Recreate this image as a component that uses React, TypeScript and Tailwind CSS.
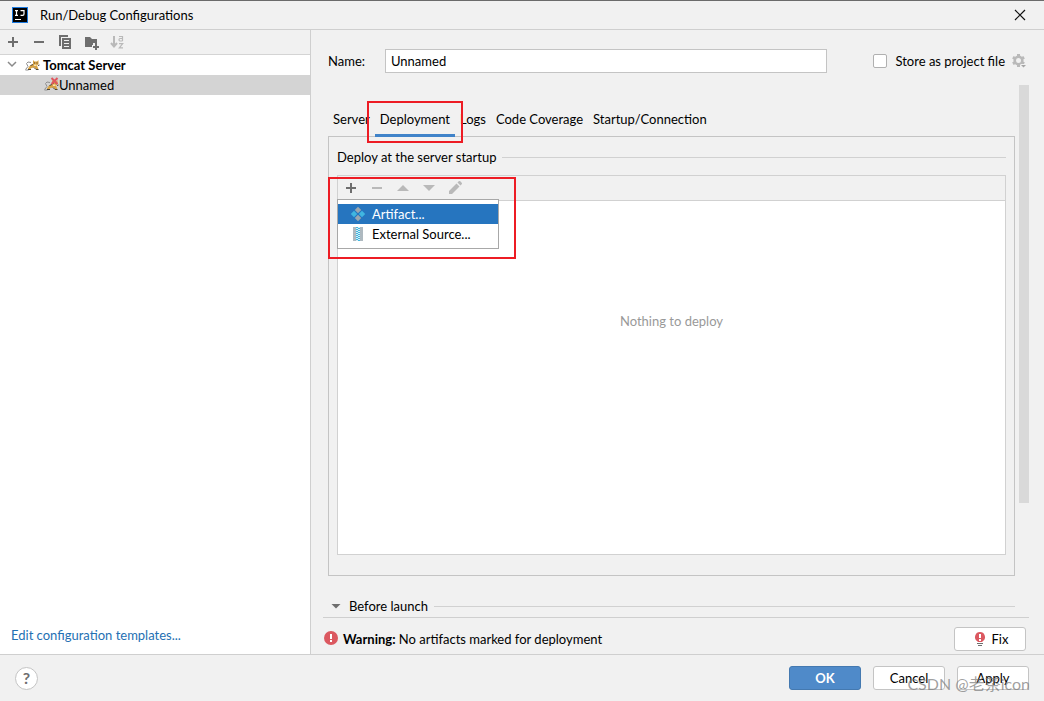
import type { ReactNode } from "react";

const tabs = ["Server", "Deployment", "Logs", "Code Coverage", "Startup/Connection"];

function IconButton({ label, disabled, children }: { label: string; disabled?: boolean; children: ReactNode }) {
  return (
    <button aria-label={label} disabled={disabled} className={`flex size-4 items-center justify-center ${disabled ? "text-[#b9b9b9]" : "text-[#6e6e6e]"}`}>
      {children}
    </button>
  );
}

function PlusIcon() {
  return (
    <svg width="16" height="16" viewBox="0 0 16 16" fill="currentColor">
      <path d="M7 3h2v4h4v2H9v4H7V9H3V7h4z" />
    </svg>
  );
}

function MinusIcon() {
  return (
    <svg width="16" height="16" viewBox="0 0 16 16" fill="currentColor">
      <path d="M3 7h10v2H3z" />
    </svg>
  );
}

function CopyIcon() {
  return (
    <svg width="16" height="16" viewBox="0 0 16 16" fill="currentColor">
      <path d="M2 1h9v2H4v9H2z" />
      <path fillRule="evenodd" d="M5 4h9v11H5zM7 6v1h5V6zM7 9v1h5V9zM7 12v1h5v-1z" />
    </svg>
  );
}

function FolderAddIcon() {
  return (
    <svg width="16" height="16" viewBox="0 0 16 16" fill="currentColor">
      <path d="M2 3h5l2 2h5v4h-4v2H9v2H2z" />
      <path d="M12 9h2v3h2v2h-2v2h-2v-2h-2v-2h2z" />
    </svg>
  );
}

function SortIcon() {
  return (
    <svg width="16" height="16" viewBox="0 0 16 16" fill="none" stroke="currentColor">
      <path strokeWidth="2" d="M5 2v10M2 9l3 3.500L8 9" />
      <path strokeWidth="1.200" d="M10 2.500h3.500v4.500M13.500 4.500H11Q10 4.500 10 5.700T11 7h2.500M10 9.600h3.700L10.300 13.900H14" />
    </svg>
  );
}

function TomcatIcon({ broken }: { broken?: boolean }) {
  return (
    <svg width="16" height="16" viewBox="0 0 16 16" className="shrink-0">
      <path fill="none" stroke="#8f8f8f" d="M1.500 12.500l2.500-3L2.500 6.500l1.500-1.500 3 .5M1.500 13h3" />
      <path fill="#d9a343" d="M4 11.500l2-3 3-1V3l1.500 1.500h2.500L14.500 3v4L13 8.500l1.500 4h-2l-2-2-3 .5L6 12.500H4z" />
      <path fill="none" stroke="#4c4435" d="M4 12.500h3M10 10.500l2 2h2.500M6.500 8.500l2.500-1M14 8.500l1.500-.5" />
      <path fill="#f6e4b3" d="M10 7.500h2.500v1.500H10z" />
      <path fill="#4c4435" d="M10 5.500h1v1h-1zM12.500 5.500h1v1h-1z" />
      {broken && <path fill="none" stroke="#e0555d" strokeWidth="2" d="M8.500 1l6 6M14.500 1l-6 6" />}
    </svg>
  );
}

function Triangle({ up }: { up?: boolean }) {
  return (
    <svg width="16" height="16" viewBox="0 0 16 16" fill="currentColor">
      <path d={up ? "M2 11l6-6 6 6z" : "M2 5h12l-6 6z"} />
    </svg>
  );
}

function PencilIcon() {
  return (
    <svg width="16" height="16" viewBox="0 0 16 16" fill="currentColor">
      <path d="M2 11l7.500-7.500 3 3L5 14H2zM10.500 2.500l1.200-1.200q.8-.8 1.600 0l1.400 1.400q.8.8 0 1.600L13.500 5.500z" />
    </svg>
  );
}

function ArtifactIcon() {
  return (
    <svg width="16" height="16" viewBox="0 0 16 16">
      <path fill="#9aa7b0" d="M8 .8l3.200 3.200L8 7.200 4.800 4zM8 8.800l3.200 3.200L8 15.200 4.800 12z" />
      <path fill="#40b6e0" d="M4 4.800L7.200 8 4 11.200.8 8zM12 4.800L15.200 8 12 11.200 8.800 8z" />
    </svg>
  );
}

function ArchiveIcon() {
  return (
    <svg width="16" height="16" viewBox="0 0 16 16">
      <path fill="#aeb9c0" d="M3 1h3v14H3zM10 1h3v14h-3z" />
      <path fill="#d4eef8" d="M6 1h4v14H6z" />
      <path fill="none" stroke="#40b6e0" strokeWidth="2" strokeDasharray="1 1" d="M7 1v14M9 2v13" />
    </svg>
  );
}

function GearIcon() {
  return (
    <svg width="16" height="16" viewBox="0 0 16 16">
      <circle cx="7.500" cy="7.500" r="3.800" fill="none" stroke="#b9b9b9" strokeWidth="2.600" />
      <path stroke="#b9b9b9" strokeWidth="3" d="M7.500 1v2M7.500 12v2M1.900 4.200l1.700 1M11.400 9.800l1.700 1M1.900 10.800l1.700-1M11.400 5.200l1.700-1" />
      <path fill="#f1f1f1" d="M9.500 11H16v5H9.500z" />
      <path fill="#a5a5a5" d="M10 12h5l-2.500 2.500z" />
    </svg>
  );
}

export default function App() {
  return (
    <div className="flex min-h-screen flex-col border-t border-[#6b6b6b] bg-[#f1f1f1] font-['Lato','Noto_Sans_CJK_SC',sans-serif] text-[13px] leading-5 text-black">
      {/* Title bar */}
      <header className="flex h-[29px] items-center border-b border-[#cfcfcf] pr-[18px] pl-3">
        <svg width="16" height="16" viewBox="0 0 16 16">
          <path fill="#1c7ae0" d="M0 0h16v16H0z" />
          <path fill="#000" d="M1 1h14v14H1z" />
          <path fill="none" stroke="#fff" strokeWidth="1.200" d="M3 3.600h3M4.500 3.600v4.800M3 8.400h3M8.500 3.600H12v3.400q0 1.400-1.400 1.400H8.500M3 12.500h6" />
        </svg>
        <h1 className="ml-3 flex-1">Run/Debug Configurations</h1>
        <button aria-label="Close" className="flex size-3 items-center justify-center">
          <svg width="12" height="12" viewBox="0 0 12 12" fill="none" stroke="#111" strokeWidth="1.200">
            <path d="M1 1l10 10M11 1L1 11" />
          </svg>
        </button>
      </header>

      <div className="flex flex-1">
        {/* Configuration tree */}
        <aside className="flex w-[311px] shrink-0 flex-col border-r border-[#cfcfcf] bg-white">
          <div className="flex h-[25px] items-center gap-[10px] border-b border-[#d4d4d4] bg-[#f1f1f1] px-[5px]">
            <IconButton label="Add"><PlusIcon /></IconButton>
            <IconButton label="Remove"><MinusIcon /></IconButton>
            <IconButton label="Copy"><CopyIcon /></IconButton>
            <IconButton label="New folder"><FolderAddIcon /></IconButton>
            <IconButton label="Sort" disabled><SortIcon /></IconButton>
          </div>
          <ul className="flex-1">
            <li className="flex h-5 items-center pl-1 font-bold">
              <svg width="16" height="16" viewBox="0 0 16 16" fill="none" stroke="#8a8a8a" strokeWidth="1.500">
                <path d="M4 5l4 4 4-4" />
              </svg>
              <span className="ml-1 flex items-center gap-[3px]"><TomcatIcon />Tomcat Server</span>
            </li>
            <li className="flex h-5 items-center bg-[#d4d4d4] pl-[43px]">
              <TomcatIcon broken />
              Unnamed
            </li>
          </ul>
          <a href="#templates" className="mb-[9px] ml-[11px] self-start text-[#2470b3]">Edit configuration templates...</a>
        </aside>

        <main className="flex min-w-0 flex-1 flex-col pr-[15px] pl-3">
          <div className="flex h-[55px] items-center pt-[6px] pl-[5px]">
            <label htmlFor="name" className="w-[57px]">Name:</label>
            <input id="name" defaultValue="Unnamed" className="h-6 min-w-0 flex-1 border border-[#c4c4c4] bg-white px-[5px] outline-none" />
            <label className="ml-[46px] flex items-center gap-2">
              <input type="checkbox" className="size-[14px] appearance-none rounded-xs border border-[#b0b0b0] bg-white" />
              Store as project file
            </label>
            <button aria-label="Storage options" className="mr-[2px] ml-[6px] size-4"><GearIcon /></button>
          </div>

          {/* Scrolled editor with its scrollbar */}
          <div className="flex flex-1">
            <div className="min-w-0 flex-1 pr-1 pl-[5px]">
              <div role="tablist" className="mt-4 -mb-px flex h-9 items-stretch">
                {tabs.map((tab) =>
                  tab === "Deployment" ? (
                    <button key={tab} role="tab" aria-selected="true" className="relative border-b-3 border-[#4083c9] px-[5px] pt-[3px]">
                      {tab}
                      <span className="pointer-events-none absolute -inset-x-2 top-0 -bottom-[9px] border-2 border-[#ed1c24]" />
                    </button>
                  ) : (
                    <button key={tab} role="tab" aria-selected="false" className="border-b-3 border-transparent px-[5px] pt-[3px]">{tab}</button>
                  ),
                )}
              </div>

              <section className="flex h-[440px] flex-col border border-[#c4c4c4] px-2 pt-[10px] pb-5">
                <div className="flex items-center gap-[6px]">
                  <h2>Deploy at the server startup</h2>
                  <span className="h-px flex-1 bg-[#d1d1d1]" />
                </div>
                <div className="relative mt-2 flex flex-1 flex-col border border-[#d1d1d1]">
                  <div className="flex h-[25px] items-center gap-[10px] border-b border-[#d1d1d1] px-[5px]">
                    <IconButton label="Add"><PlusIcon /></IconButton>
                    <IconButton label="Remove" disabled><MinusIcon /></IconButton>
                    <IconButton label="Move up" disabled><Triangle up /></IconButton>
                    <IconButton label="Move down" disabled><Triangle /></IconButton>
                    <IconButton label="Edit" disabled><PencilIcon /></IconButton>
                  </div>
                  <div className="flex flex-1 justify-center bg-white pt-[110px] text-[#999]">Nothing to deploy</div>

                  {/* Add menu */}
                  <div role="menu" className="absolute top-[23px] -left-px w-[162px] border border-[#a8a8a8] bg-white py-1">
                    <button role="menuitem" className="flex h-5 w-full items-center gap-[6px] bg-[#2675bf] pl-3 text-white"><ArtifactIcon />Artifact...</button>
                    <button role="menuitem" className="flex h-5 w-full items-center gap-[6px] pl-3"><ArchiveIcon />External Source...</button>
                  </div>
                  <span className="pointer-events-none absolute top-px -left-[10px] h-[82px] w-[188px] border-2 border-[#ed1c24]" />
                </div>
              </section>

              <div className="mt-5 flex items-center gap-[6px]">
                <button className="flex items-center gap-[5px] text-[#6e6e6e]">
                  <svg width="16" height="16" viewBox="0 0 16 16" fill="currentColor"><path d="M3.500 6h9L8 10.500z" /></svg>
                  <span className="text-black">Before launch</span>
                </button>
                <span className="h-px flex-1 bg-[#d1d1d1]" />
              </div>
            </div>
            <div className="h-[418px] w-[10px] bg-[#d9d9d9]" />
          </div>

          <div className="flex h-[37px] items-center border-t border-[#cfcfcf] pt-[5px] pr-[3px]">
            <svg width="16" height="16" viewBox="0 0 16 16">
              <circle cx="8" cy="7" r="7" fill="#db5860" />
              <path fill="#fff" d="M7 3h2v5H7zM7 9h2v2H7z" />
            </svg>
            <p className="ml-1 flex-1"><b>Warning:</b> No artifacts marked for deployment</p>
            <button className="flex h-6 w-[72px] items-center justify-center gap-1 rounded-[3px] border border-[#c4c4c4] bg-white">
              <svg width="16" height="16" viewBox="0 0 16 16">
                <path fill="#db5860" d="M8 1a5 5 0 0 1 3 9l-1 1H6l-1-1a5 5 0 0 1 3-9z" />
                <path fill="#fff" d="M7 3h2v4H7zM7 8h2v2H7z" />
                <path fill="#6e6e6e" d="M5 12h6v1H5zM6 14h4v1H6z" />
              </svg>
              Fix
            </button>
          </div>
        </main>
      </div>

      <footer className="relative flex h-[47px] items-center gap-3 border-t border-[#cfcfcf] px-[15px]">
        <button aria-label="Help" className="flex size-[23px] items-center justify-center rounded-full border border-[#c4c4c4] bg-white text-base font-bold text-[#6e6e6e]">?</button>
        <button className="ml-auto h-6 w-[72px] rounded-[3px] border border-[#4479b0] bg-[#4f8ac9] font-bold text-white">OK</button>
        <button className="h-6 w-[72px] rounded-[3px] border border-[#c4c4c4] bg-white">Cancel</button>
        <button className="h-6 w-[72px] rounded-[3px] border border-[#c4c4c4] bg-white">Apply</button>
        <span className="pointer-events-none absolute right-[14px] bottom-[7px] text-base leading-5 text-[#777]/70">CSDN @老茶icon</span>
      </footer>
    </div>
  );
}
